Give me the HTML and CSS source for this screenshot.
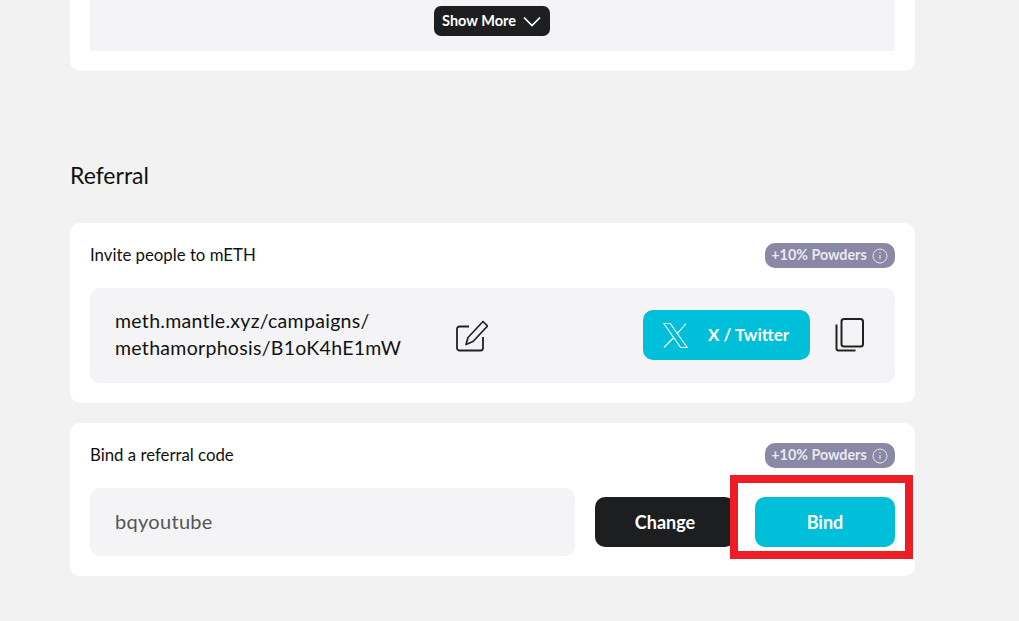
FILE: index.html
```html
<!DOCTYPE html>
<html lang="en">
<head>
<meta charset="utf-8">
<title>Referral</title>
<link rel="stylesheet" href="styles.css">
</head>
<body>
<main class="page">
  <section class="card card-top">
    <div class="more-area">
      <button class="btn-more"><span class="lift">Show More</span>
        <svg class="chev" viewBox="0 0 18 11" width="18" height="11"><path d="M1 1.500 9 9.500l8-8" fill="none" stroke="#fff" stroke-width="1.700"/></svg>
      </button>
    </div>
  </section>

  <h2 class="heading">Referral</h2>

  <section class="card card-invite">
    <div class="card-head">
      <span class="card-title">Invite people to mETH</span>
      <span class="badge"><span class="lift">+10% Powders</span>
        <svg class="info" viewBox="0 0 16 16" width="16" height="16"><circle cx="8" cy="8" r="7" fill="none" stroke="#e6e6ee" stroke-width="1"/><path d="M8 7v4.600M8 4.200v1.400" stroke="#e6e6ee" stroke-width="1.100" fill="none"/></svg>
      </span>
    </div>
    <div class="link-box">
      <div class="link-text">meth.mantle.xyz/campaigns/<br>methamorphosis/B1oK4hE1mW</div>
      <svg class="edit" viewBox="0 0 32 32" width="32" height="32"><path d="M13 6.500H3.500a2.500 2.500 0 0 0-2.500 2.500v19a2.500 2.500 0 0 0 2.500 2.500h21a2.500 2.500 0 0 0 2.500-2.500V17" fill="none" stroke="#222" stroke-width="1.800"/><path d="M10 24.500 12 17.500 27 1.500l4.500 4.500L17 21.500z" fill="none" stroke="#222" stroke-width="1.700" stroke-linejoin="round"/></svg>
      <div class="share">
        <button class="btn-x">
          <svg viewBox="0 0 25 25" width="25" height="25"><path d="M.800.500h6.500l16.900 24h-6.500zM23 .500 13.800 11.200M10.800 14.500.900 24.500" fill="none" stroke="#fff" stroke-width="1.100"/></svg>
          <span class="lift">X / Twitter</span>
        </button>
        <svg class="copy" viewBox="0 0 29 34" width="29" height="34"><rect x="6.500" y="1" width="21.500" height="27.500" rx="2.500" fill="none" stroke="#222" stroke-width="2"/><path d="M1.500 6.500v24a2 2 0 0 0 2 2h17" fill="none" stroke="#222" stroke-width="2"/></svg>
      </div>
    </div>
  </section>

  <section class="card card-bind">
    <div class="card-head">
      <span class="card-title">Bind a referral code</span>
      <span class="badge"><span class="lift">+10% Powders</span>
        <svg class="info" viewBox="0 0 16 16" width="16" height="16"><circle cx="8" cy="8" r="7" fill="none" stroke="#e6e6ee" stroke-width="1"/><path d="M8 7v4.600M8 4.200v1.400" stroke="#e6e6ee" stroke-width="1.100" fill="none"/></svg>
      </span>
    </div>
    <div class="bind-row">
      <div class="code-field">bqyoutube</div>
      <button class="btn btn-dark">Change</button>
      <button class="btn btn-cyan">Bind</button>
    </div>
    <div class="highlight"></div>
  </section>
</main>
</body>
</html>
```
FILE: styles.css
```css
* { box-sizing: border-box; }
html, body { margin: 0; height: 621px; overflow: hidden; }
body { background: #f2f2f3; font-family: "Lato", "Liberation Sans", sans-serif; color: #111; }
.page { width: 845px; margin-left: 70px; }
button { font-family: inherit; border: 0; cursor: pointer; }
.lift { padding-bottom: 2px; }

.card { background: #fff; border-radius: 10px; padding: 0 20px 20px; }
.card-top { border-radius: 0 0 10px 10px; }
.more-area { height: 51px; background: #f4f4f6; display: flex; justify-content: center; align-items: flex-start; padding: 6px 1px 0 0; }
.btn-more { width: 116px; height: 30px; border-radius: 7px; background: #1d1e20; color: #fff; font-size: 14.500px; font-weight: 700; display: flex; align-items: center; justify-content: center; gap: 7px; padding: 0 1px 0 0; }

.heading { font-size: 23px; font-weight: 400; line-height: 26px; margin: 91px 0 35px; color: #111; }

.card-invite { padding-top: 20px; margin-bottom: 20px; height: 180px; }
.card-bind { padding-top: 20px; height: 153px; position: relative; }
.card-head { display: flex; justify-content: space-between; align-items: center; height: 25px; margin-bottom: 20px; }
.card-title { font-size: 16.800px; padding-bottom: 2px; }
.badge { width: 130px; height: 25px; border-radius: 10px; background: #8b88a5; color: #e9e9f0; font-size: 14.300px; font-weight: 700; display: flex; align-items: center; justify-content: center; gap: 5px; padding-right: 1px; }
.info { flex: none; }

.link-box { height: 95px; border-radius: 10px; background: #f4f4f6; display: flex; align-items: center; padding: 0 31px 0 25px; }
.link-text { width: 341px; font-size: 19.500px; line-height: 27px; letter-spacing: .3px; padding-bottom: 3px; }
.edit { flex: none; }
.share { margin-left: auto; display: flex; align-items: center; gap: 25px; padding-bottom: 1px; }
.btn-x { width: 167px; height: 50px; border-radius: 10px; background: #00bfd8; color: #fff; font-size: 17px; font-weight: 700; display: flex; align-items: center; padding: 0 0 0 20px; gap: 20px; }
.btn-x svg { flex: none; }
.copy { flex: none; }

.bind-row { display: flex; align-items: center; gap: 20px; }
.code-field { width: 485px; height: 68px; border-radius: 10px; background: #f4f4f6; color: #555; font-size: 20px; letter-spacing: .3px; display: flex; align-items: center; padding: 0 0 3px 25px; }
.btn { width: 140px; height: 50px; border-radius: 10px; color: #fff; font-size: 18px; font-weight: 700; padding: 0 0 1px; }
.btn-dark { background: #1d1e20; }
.btn-cyan { background: #00bfd8; }
.highlight { position: absolute; left: 660px; top: 52px; width: 183px; height: 84px; border: 8.500px solid #ee1c25; pointer-events: none; }
```
